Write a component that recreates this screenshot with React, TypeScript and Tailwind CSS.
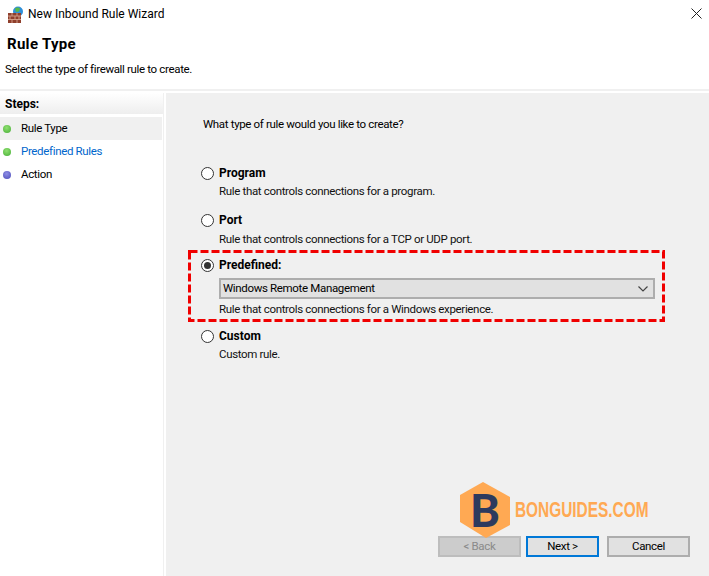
const radioLabel = "font-bold text-[12px] tracking-normal leading-[16px] text-black";
const desc = "leading-[16px] text-[#111]";

function Radio({ checked }: { checked?: boolean }) {
  return (
    <span className="flex h-[13px] w-[13px] shrink-0 items-center justify-center rounded-full border border-[#333] bg-white">
      {checked && <span className="h-[7px] w-[7px] rounded-full bg-[#333]" />}
    </span>
  );
}

function Bullet({ color }: { color: string }) {
  return <span className={`h-[8px] w-[8px] rounded-full ${color}`} />;
}

function WizardIcon() {
  return (
    <svg width="16" height="17" viewBox="0 0 16 17" className="shrink-0">
      <circle cx="10" cy="5.5" r="5" fill="#2f8fd8" />
      <path d="M7 2.5c2-1.5 4-1 5 0l-1 3-3 .5z" fill="#58b848" />
      <rect x="0" y="7" width="13" height="10" fill="#8f3f2c" />
      <path d="M0 10h13M0 13.5h13M4 7v3M9 7v3M2 10v3.5M7 10v3.5M11 10v3.5M4 13.5V17M9 13.5V17" stroke="#cf9a85" strokeWidth="1" fill="none" />
    </svg>
  );
}

function Btn({ label, variant }: { label: string; variant?: "off" | "primary" }) {
  const cls =
    variant === "off"
      ? "w-[83px] border-2 border-[#bdbdbd] bg-[#cccccc] text-[#8a8a8a]"
      : variant === "primary"
        ? "w-[73px] border-2 border-[#0078d7] bg-[#e1e1e1] text-black"
        : "w-[83px] border-2 border-[#adadad] bg-[#e1e1e1] text-black";
  return (
    <div className={`flex h-[21px] items-center justify-center pt-[1px] ${cls}`}>{label}</div>
  );
}

export default function App() {
  return (
    <div className="relative flex h-[576px] w-[709px] flex-col overflow-hidden bg-white font-['Roboto',sans-serif] text-[11.5px] tracking-[-0.34px] text-black">
      {/* title bar */}
      <div className="flex h-[28px] items-center pl-[8px] pr-[7px]">
        <WizardIcon />
        <span className="ml-[4px] text-[12px] tracking-normal">New Inbound Rule Wizard</span>
        <svg width="11" height="11" viewBox="0 0 11 11" className="mb-[1px] ml-auto">
          <path d="M.5.5l10 10M10.5.5l-10 10" stroke="#222" strokeWidth="1" fill="none" />
        </svg>
      </div>

      {/* header */}
      <div className="h-[63px] border-b-2 border-[#f0f0f0]">
        <div className="ml-[7px] mt-[7px] text-[15px] font-bold leading-[18px] tracking-[0.3px]">Rule Type</div>
        <div className="ml-[5px] mt-[8px] leading-[16px]">Select the type of firewall rule to create.</div>
      </div>

      <div className="flex min-h-0 flex-1 pt-[2px]">
        {/* steps */}
        <div className="mr-[2px] w-[164px] shrink-0 border-r border-[#f0f0f0]">
          <div className="flex h-[21px] items-center bg-gradient-to-b from-white to-[#eeeeee] pl-[5px] text-[12px] font-bold tracking-normal">Steps:</div>
          <div className="mt-[3px] flex h-[23px] w-[162px] items-center gap-[10px] bg-[#f0f0f0] pl-[3px] pt-[1px]">
            <Bullet color="bg-[radial-gradient(circle_at_45%_35%,#8fe070,#46ad36)]" />
            Rule Type
          </div>
          <div className="flex h-[23px] items-center gap-[10px] pl-[3px] pt-[1px] text-[#0066cc]">
            <Bullet color="bg-[radial-gradient(circle_at_45%_35%,#8fe070,#46ad36)]" />
            Predefined Rules
          </div>
          <div className="flex h-[23px] items-center gap-[10px] pl-[3px] pt-[1px]">
            <Bullet color="bg-[radial-gradient(circle_at_45%_35%,#8f8fe6,#4c4cb8)]" />
            Action
          </div>
        </div>

        {/* main pane */}
        <div className="flex min-w-0 flex-1 flex-col bg-[#f0f0f0]">
          <div className="mt-[23px] pl-[37px] leading-[16px]">What type of rule would you like to create?</div>

          <div className="mt-[33px] flex flex-col pl-[35px]">
            <div className="flex items-center gap-[5px]">
              <Radio />
              <span className={radioLabel}>Program</span>
            </div>
            <div className={`ml-[18px] mt-[2px] ${desc}`}>Rule that controls connections for a program.</div>

            <div className="mt-[13px] flex items-center gap-[5px]">
              <Radio />
              <span className={radioLabel}>Port</span>
            </div>
            <div className={`ml-[18px] mt-[3px] ${desc}`}>Rule that controls connections for a TCP or UDP port.</div>
          </div>

          <div className="relative ml-[22px] mt-[3px] h-[72px] w-[477px] pl-[13px] pt-[7px]">
            <svg width="477" height="72" className="absolute left-0 top-0">
              <rect x="1.5" y="1.5" width="474" height="69" fill="none" stroke="#f00000" strokeWidth="3" strokeDasharray="8 3" />
            </svg>
            <div className="flex items-center gap-[5px]">
              <Radio checked />
              <span className={radioLabel}>Predefined:</span>
            </div>
            <div className="ml-[18px] mt-[5px] flex h-[21px] w-[436px] items-center justify-between border-2 border-[#adadad] bg-[#e1e1e1] pl-[2px] pr-[5px] pt-[1px]">
              Windows Remote Management
              <svg width="10" height="6" viewBox="0 0 10 6">
                <path d="M.5.5L5 5 9.5.5" stroke="#444" strokeWidth="1.2" fill="none" />
              </svg>
            </div>
            <div className={`ml-[18px] mt-[2px] ${desc}`}>Rule that controls connections for a Windows experience.</div>
          </div>

          <div className="mt-[6px] flex flex-col pl-[35px]">
            <div className="flex items-center gap-[5px]">
              <Radio />
              <span className={radioLabel}>Custom</span>
            </div>
            <div className={`ml-[18px] mt-[2px] ${desc}`}>Custom rule.</div>
          </div>

          <div className="mt-auto mb-[19px] flex pl-[272px]">
            <Btn label="< Back" variant="off" />
            <div className="ml-[5px]"><Btn label="Next >" variant="primary" /></div>
            <div className="ml-[8px]"><Btn label="Cancel" /></div>
          </div>
        </div>
      </div>

      {/* watermark */}
      <div className="absolute left-[460px] top-[482px] flex items-center">
        <div className="relative h-[56px] w-[50px]">
          <svg width="50" height="56" viewBox="0 0 50 56" className="absolute left-0 top-0">
            <polygon points="23,0 50,15 50,43 26,56 0,40 0,13" fill="#ffa953" />
          </svg>
          <span className="absolute inset-0 flex items-center justify-center font-['Lato',sans-serif] text-[45px] font-black leading-none tracking-normal text-[#2d3a5e]">B</span>
        </div>
        <span className="ml-[5px] mb-[1px] origin-left scale-x-[0.7] font-['Liberation_Sans',sans-serif] text-[22px] font-bold leading-none tracking-normal text-[#ffa953]">BONGUIDES.COM</span>
      </div>
    </div>
  );
}
